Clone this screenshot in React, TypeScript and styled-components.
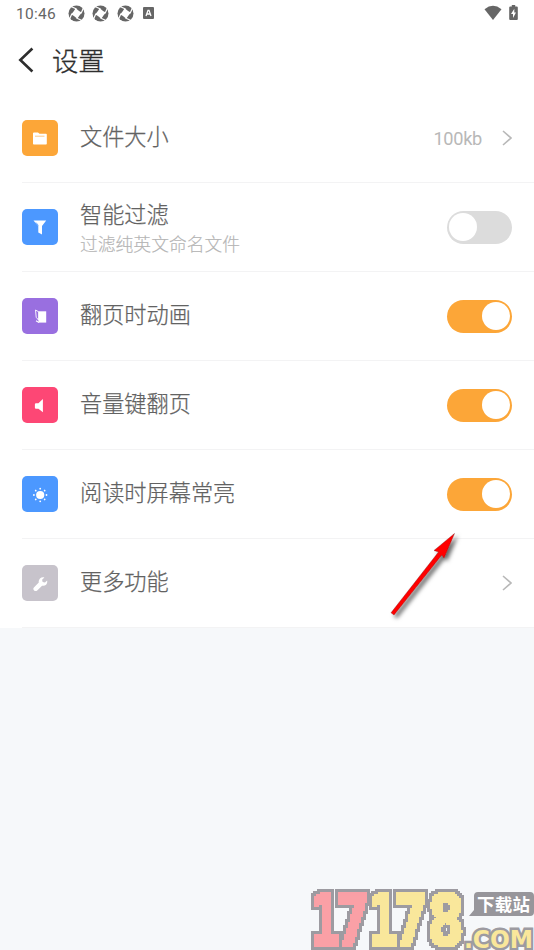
import React, { useState } from "react";
import styled, { createGlobalStyle } from "styled-components";

const Global = createGlobalStyle`
  * { box-sizing: border-box; }
  body { margin: 0; background: #f6f8fa; font-family: Roboto, "Noto Sans CJK SC", sans-serif; }
`;

const Screen = styled.main`
  position: relative;
  width: 534px;
  height: 950px;
  overflow: hidden;
  background: #f6f8fa;
`;

const Panel = styled.section`
  height: 628px;
  background: #fff;
`;

const StatusBar = styled.div`
  display: flex;
  justify-content: space-between;
  height: 28px;
  padding: 0 16px 2px 16px;
  color: #666;
`;

const StatusGroup = styled.div<{ $gap: number }>`
  display: flex;
  align-items: center;
  gap: ${(p) => p.$gap}px;
`;

const Clock = styled.span`
  width: 44px;
  padding-top: 2px;
  font: 400 15.5px/26px Roboto, sans-serif;
  letter-spacing: 0.25px;
  white-space: nowrap;
`;

const Header = styled.header`
  display: flex;
  align-items: center;
  height: 66px;
  padding: 0 0 2px 18px;
  color: #2e2e2e;
`;

const Title = styled.h1`
  margin: 0 0 0 17px;
  font: 300 26.3px/40px "Noto Sans CJK SC", sans-serif;
  -webkit-text-stroke: 0.3px currentColor;
`;

const Row = styled.div`
  display: flex;
  align-items: center;
  height: 89px;
  margin-left: 22px;
  padding-right: 22px;
  border-bottom: 1px solid #f3f3f4;
`;

const Tile = styled.div<{ $color: string }>`
  display: grid;
  place-items: center;
  width: 36px;
  height: 36px;
  border-radius: 5px;
  background: ${(p) => p.$color};
`;

const Labels = styled.div<{ $double?: boolean }>`
  flex: 1;
  margin-left: 22px;
  padding-bottom: ${(p) => (p.$double ? 0 : 7)}px;
`;

const Label = styled.div`
  color: #626262;
  font: 300 22.2px/32px "Noto Sans CJK SC", sans-serif;
  -webkit-text-stroke: 0.25px currentColor;
`;

const Hint = styled.div`
  color: #b4b4b4;
  font: 300 17.8px/28px "Noto Sans CJK SC", sans-serif;
  -webkit-text-stroke: 0.15px currentColor;
`;

const Value = styled.span`
  margin-right: 20px;
  padding-top: 1px;
  color: #b8b8b8;
  font: 400 18.2px/24px Roboto, sans-serif;
  letter-spacing: -0.3px;
`;

const Switch = styled.button<{ $on: boolean }>`
  display: flex;
  align-items: center;
  justify-content: ${(p) => (p.$on ? "flex-end" : "flex-start")};
  width: 65px;
  height: 33px;
  padding: 0 2px;
  border: 0;
  border-radius: 17px;
  background: ${(p) => (p.$on ? "#fca638" : "#dcdcdc")};
`;

const Knob = styled.span`
  width: 28px;
  height: 28px;
  border-radius: 50%;
  background: #fff;
`;

const Pointer = styled.svg`
  position: absolute;
  left: 380px;
  top: 524px;
`;

const Watermark = styled.svg`
  position: absolute;
  left: 304px;
  top: 884px;
`;

const Shutter = () => (
  <svg width="17" height="17" viewBox="0 0 17 17">
    <circle cx="8.5" cy="8.5" r="8" fill="#666" />
    <path d="M8.5 3.8 13.2 8.5 8.5 13.2 3.8 8.5Z" fill="#fff" />
    {[0, 90, 180, 270].map((a) => (
      <path key={a} d="M4.2 8.2 9.8 3.9 6 0" fill="none" stroke="#fff" strokeWidth="1.2" transform={`rotate(${a - 22} 8.5 8.5)`} />
    ))}
  </svg>
);

const Chevron = () => (
  <svg width="10" height="16" viewBox="0 0 10 16" fill="none" stroke="#b8b8b8" strokeWidth="1.6">
    <path d="M1 1 9 8 1 15" />
  </svg>
);

const glyphs = {
  folder: (
    <>
      <path d="M2 4.3Q2 3.4 3 3.4h4l1.5 1.3H15q.8 0 .8.8v9.2q0 .8-.8.8H2.8q-.8 0-.8-.8Z" />
      <path d="M4 7.2h9.5" stroke="#fca638" strokeWidth=".6" />
    </>
  ),
  funnel: (
    <>
      <path d="M2.5 2.5h12.7L11 8v8.6L7.3 14.5V8Z" />
      <path d="m5 4.5 2.4 3" stroke="#4c98ff" strokeWidth=".8" />
    </>
  ),
  page: (
    <>
      <path d="M7.5 4.3H15.200v11.300H7.500Z" />
      <path d="M4.5 3 7.7 4.8v8.400L5.2 10.3Z" fill="none" stroke="#fff" strokeWidth=".9" />
      <path d="M5 13.8 8 15.4" stroke="#fff" strokeWidth="1.1" />
    </>
  ),
  speaker: <path d="M11.9 3v13.2L7.4 12.7H5q-1.1 0-1.1-1V8.2q0-1 1.1-1h2.4Z" />,
  sun: (
    <>
      <circle cx="9.2" cy="10" r="4.1" />
      {[0, 45, 90, 135, 180, 225, 270, 315].map((a) => (
        <circle key={a} cx="9.2" cy="3.7" r=".9" transform={`rotate(${a} 9.2 10)`} />
      ))}
    </>
  ),
  wrench: (
    <path d="M13.4 3.4 11.1 5.7 11.6 8.1 14 8.6 16.1 6.4C17 9.7 14.5 12.4 11.1 11.7L6.2 16.5C4.2 18.4 1 15.3 2.9 13.4L7.8 8.6C7 5.1 10.3 2.4 13.4 3.4Z" />
  ),
};

const Glyph = ({ name }: { name: keyof typeof glyphs }) => (
  <svg width="18" height="18" viewBox="0 0 18 18" fill="#fff">
    {glyphs[name]}
  </svg>
);

type Item = {
  icon: keyof typeof glyphs;
  color: string;
  label: string;
  hint?: string;
  value?: string;
  on?: boolean;
};

const items: Item[] = [
  { icon: "folder", color: "#fca638", label: "文件大小", value: "100kb" },
  { icon: "funnel", color: "#4c98ff", label: "智能过滤", hint: "过滤纯英文命名文件", on: false },
  { icon: "page", color: "#996fe0", label: "翻页时动画", on: true },
  { icon: "speaker", color: "#fd4775", label: "音量键翻页", on: true },
  { icon: "sun", color: "#4c98ff", label: "阅读时屏幕常亮", on: true },
  { icon: "wrench", color: "#c7c3cb", label: "更多功能" },
];

const Setting = ({ item }: { item: Item }) => {
  const [on, setOn] = useState(item.on ?? false);
  return (
    <Row>
      <Tile $color={item.color}><Glyph name={item.icon} /></Tile>
      <Labels $double={!!item.hint}>
        <Label>{item.label}</Label>
        {item.hint && <Hint>{item.hint}</Hint>}
      </Labels>
      {item.value && <Value>{item.value}</Value>}
      {item.on === undefined ? (
        <Chevron />
      ) : (
        <Switch $on={on} role="switch" aria-checked={on} aria-label={item.label} onClick={() => setOn(!on)}>
          <Knob />
        </Switch>
      )}
    </Row>
  );
};

const digits = [
  { c: "1", x: 7, w: 29, fill: "#faa0a6" },
  { c: "7", x: 32, w: 33, fill: "#faa0a6" },
  { c: "1", x: 65, w: 29, fill: "#f9e79b" },
  { c: "7", x: 90, w: 33, fill: "#f9e79b" },
  { c: "8", x: 124, w: 36, fill: "#f9e79b" },
];

const PixelFilter = ({ id, cell, edge }: { id: string; cell: number; edge: number }) => (
  <filter id={id} filterUnits="userSpaceOnUse" x="0" y="0" width="230" height="66" colorInterpolationFilters="sRGB">
    <feFlood x={cell / 2} y={cell / 2} width="1" height="1" floodColor="#000" />
    <feComposite in2="SourceGraphic" operator="over" x="0" y="0" width={cell} height={cell} result="dot" />
    <feTile in="dot" result="grid" />
    <feComposite in="SourceGraphic" in2="grid" operator="in" />
    <feMorphology operator="dilate" radius={cell / 2} />
    <feComponentTransfer result="face">
      <feFuncA type="discrete" tableValues="0 1" />
    </feComponentTransfer>
    <feMorphology in="face" operator="dilate" radius={edge} result="spread" />
    <feFlood floodColor="#9d9ba1" />
    <feComposite in2="spread" operator="in" result="rim" />
    <feMerge>
      <feMergeNode in="rim" />
      <feMergeNode in="face" />
    </feMerge>
  </filter>
);

const SiteMark = () => (
  <Watermark width="230" height="66" viewBox="0 0 230 66" fontFamily="DejaVu Sans" fontWeight="700">
    <defs>
      <PixelFilter id="pixelLarge" cell={2} edge={3} />
    </defs>
    {digits.map((d) => (
      <g key={d.x} filter="url(#pixelLarge)">
        <text
          x={d.x}
          y="61"
          fontSize="69"
          fill={d.fill}
          stroke={d.fill}
          strokeWidth="2"
          textLength={d.w}
          lengthAdjust="spacingAndGlyphs"
        >
          {d.c}
        </text>
      </g>
    ))}
    <path d="M170 12q0-4 4-4h52q4 0 4 4v16q0 4-4 4h-61l5-6Z" fill="#97969b" />
    <text x="173" y="27" fontFamily="Noto Sans CJK SC" fontSize="17.5" fill="#fff" textLength="53">下载站</text>
    <text
      x="160"
      y="64"
      fontSize="25"
      fill="#f9e79b"
      stroke="#9d9ba1"
      strokeWidth="5"
      strokeLinejoin="miter"
      paintOrder="stroke"
      textLength="69"
      lengthAdjust="spacingAndGlyphs"
    >
      .COM
    </text>
  </Watermark>
);

export default function App() {
  return (
    <>
      <Global />
      <Screen>
        <Panel>
          <StatusBar>
            <StatusGroup $gap={7.5}>
              <Clock>10:46</Clock>
              <Shutter />
              <Shutter />
              <Shutter />
              <svg width="13" height="12" viewBox="0 0 13 12">
                <rect x="2" width="11" height="12" rx="1" fill="#666" />
                <path d="m5 9 2-5.7h1L10 9M6 7h3" fill="none" stroke="#fff" strokeWidth="1.3" />
              </svg>
            </StatusGroup>
            <StatusGroup $gap={7}>
              <svg width="18" height="16" viewBox="0 0 18 16">
                <path d="M.5 4.2Q9-2.6 17.5 4.2L9 15Z" fill="#666" />
              </svg>
              <svg width="9" height="16" viewBox="0 0 9 16">
                <path d="M2.8 0h3.4v1.6h1.6q1 0 1 1v11.5q0 1-1 1H1.2q-1 0-1-1V2.6q0-1 1-1h1.6Z" fill="#666" />
                <path d="M5.3 3.8 2 9h2v4l3-5.4H5.3Z" fill="#fff" />
              </svg>
            </StatusGroup>
          </StatusBar>
          <Header>
            <svg width="17" height="26" viewBox="0 0 17 26" fill="none" stroke="currentColor" strokeWidth="2.6">
              <path d="M14.4 1.5 2.3 13l12.1 11.5" />
            </svg>
            <Title>设置</Title>
          </Header>
          {items.map((item) => <Setting key={item.label} item={item} />)}
        </Panel>
        <Pointer width="90" height="100" viewBox="0 0 90 100">
          <defs>
            <filter id="shade" x="-20%" y="-20%" width="150%" height="150%">
              <feDropShadow dx="3" dy="3" stdDeviation="2" floodColor="#000" floodOpacity=".6" />
            </filter>
          </defs>
          <path
            d="M74.5 9.5 64 34 61.8 31 14 91 11 88.8 58.5 28 54 26.5Z"
            fill="#f00"
            stroke="#7d2020"
            strokeWidth=".4"
            filter="url(#shade)"
          />
        </Pointer>
        <SiteMark />
      </Screen>
    </>
  );
}
